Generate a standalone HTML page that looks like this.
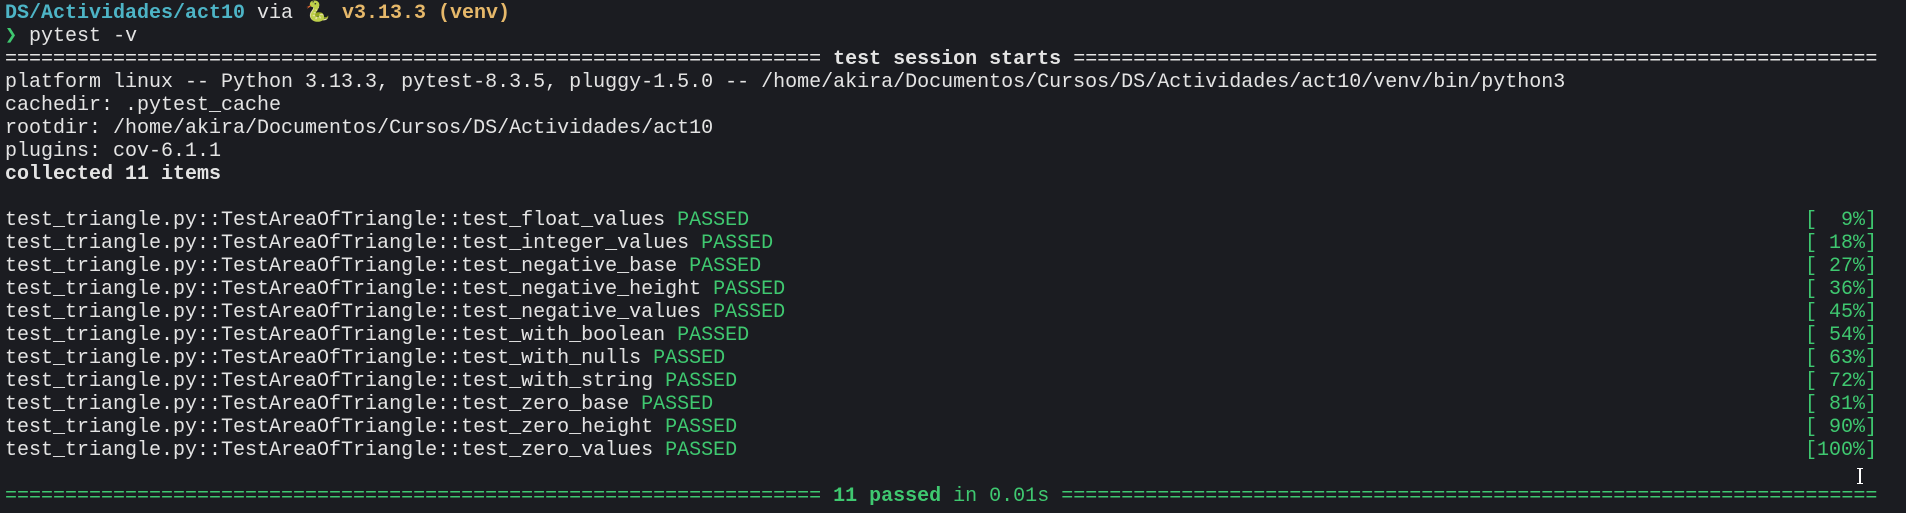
<!DOCTYPE html>
<html><head><meta charset="utf-8"><style>
html,body{margin:0;padding:0;background:#1b1c21;width:1906px;height:513px;overflow:hidden}
pre{margin:0;padding:2px 0 0 5px;font-family:"Liberation Mono",monospace;font-size:20.01px;line-height:23px;color:#e4e4e4;white-space:pre;position:relative}
.c{color:#4db4c6;font-weight:bold}.y{color:#e6b86a;font-weight:bold}.g{color:#3fc870}.gb{color:#3fc870;font-weight:bold}.b{font-weight:bold}
.p{position:absolute;left:1805px;color:#3fc870}
</style></head><body><pre><span class="c">DS/Actividades/act10</span> via <span style="color:#8fc43a">🐍</span> <span class="y">v3.13.3 (venv)</span>
<span class="g">❯</span> pytest -v
====================================================================<span class="b"> test session starts </span>===================================================================
platform linux -- Python 3.13.3, pytest-8.3.5, pluggy-1.5.0 -- /home/akira/Documentos/Cursos/DS/Actividades/act10/venv/bin/python3
cachedir: .pytest_cache
rootdir: /home/akira/Documentos/Cursos/DS/Actividades/act10
plugins: cov-6.1.1
<span class="b">collected 11 items</span>

test_triangle.py::TestAreaOfTriangle::test_float_values <span class="g">PASSED</span><span class="p">[  9%]</span>
test_triangle.py::TestAreaOfTriangle::test_integer_values <span class="g">PASSED</span><span class="p">[ 18%]</span>
test_triangle.py::TestAreaOfTriangle::test_negative_base <span class="g">PASSED</span><span class="p">[ 27%]</span>
test_triangle.py::TestAreaOfTriangle::test_negative_height <span class="g">PASSED</span><span class="p">[ 36%]</span>
test_triangle.py::TestAreaOfTriangle::test_negative_values <span class="g">PASSED</span><span class="p">[ 45%]</span>
test_triangle.py::TestAreaOfTriangle::test_with_boolean <span class="g">PASSED</span><span class="p">[ 54%]</span>
test_triangle.py::TestAreaOfTriangle::test_with_nulls <span class="g">PASSED</span><span class="p">[ 63%]</span>
test_triangle.py::TestAreaOfTriangle::test_with_string <span class="g">PASSED</span><span class="p">[ 72%]</span>
test_triangle.py::TestAreaOfTriangle::test_zero_base <span class="g">PASSED</span><span class="p">[ 81%]</span>
test_triangle.py::TestAreaOfTriangle::test_zero_height <span class="g">PASSED</span><span class="p">[ 90%]</span>
test_triangle.py::TestAreaOfTriangle::test_zero_values <span class="g">PASSED</span><span class="p">[100%]</span>

<span class="g">==================================================================== </span><span class="gb">11 passed</span><span class="g"> in 0.01s ====================================================================</span></pre>
<div style="position:absolute;left:1857px;top:468px;width:6px;height:16px;border:1px solid #fff;border-left:none;border-right:none;box-sizing:border-box"><div style="position:absolute;left:2px;top:0;width:2px;height:14px;background:#fff"></div></div>
</body></html>
